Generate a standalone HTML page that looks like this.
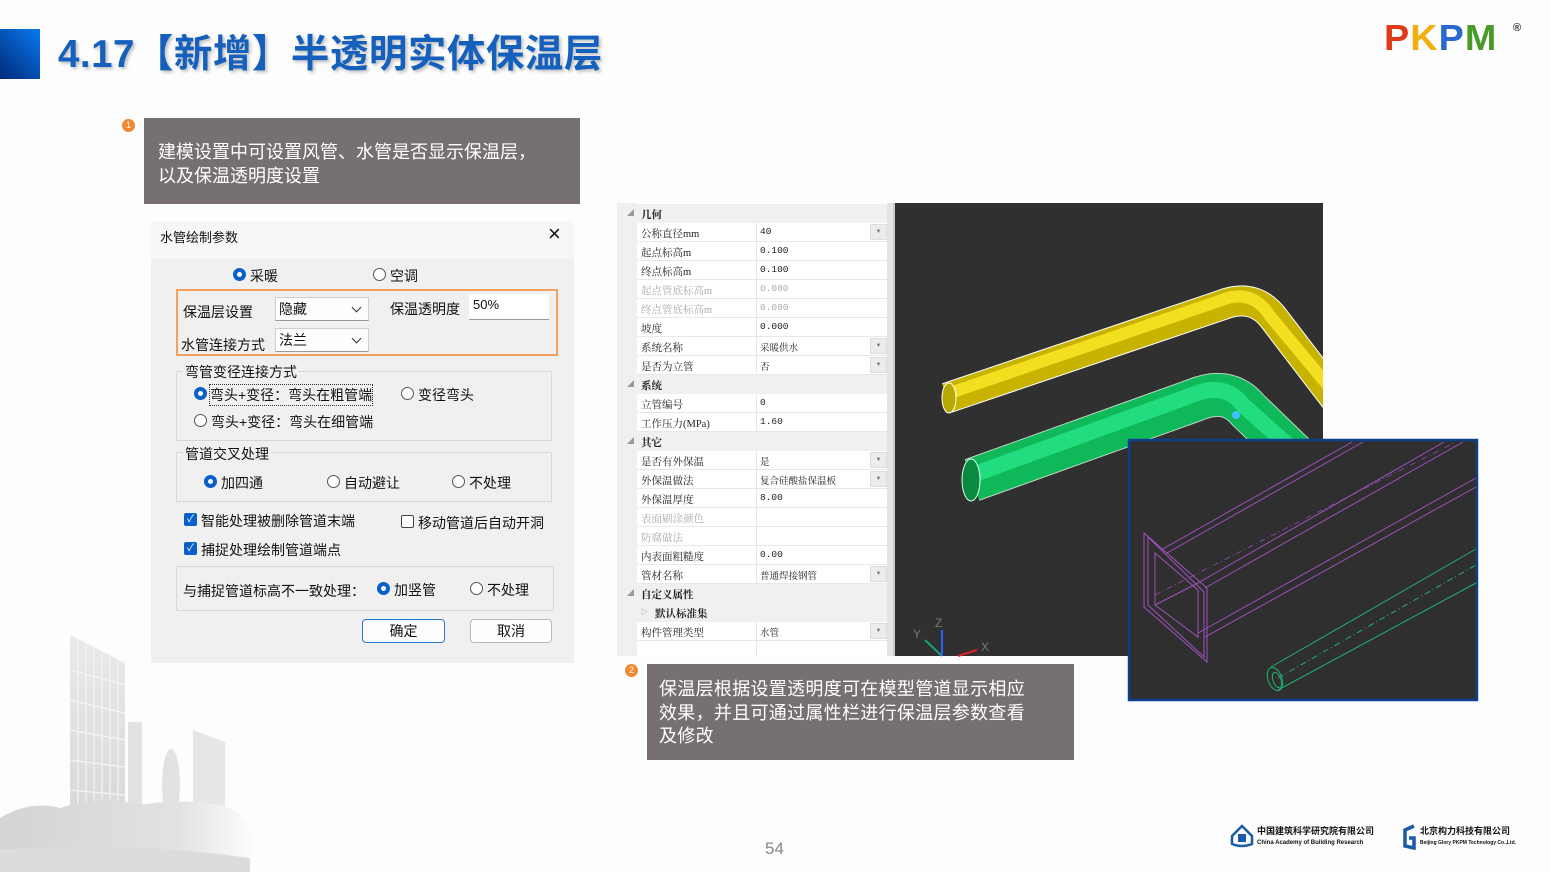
<!DOCTYPE html>
<html><head><meta charset="utf-8">
<style>
*{margin:0;padding:0;box-sizing:border-box}
body{width:1551px;height:872px;background:#fdfdfd;position:relative;overflow:hidden;font-family:"Liberation Sans","Noto Sans CJK SC",sans-serif}
.abs{position:absolute}
.title{left:58px;top:23px;font-size:38.5px;font-weight:bold;color:#1560bd;letter-spacing:0.5px;text-shadow:2px 2px 3px rgba(0,0,0,0.25);white-space:nowrap}
.callout{background:#767070;color:#fff;font-size:18px;line-height:23.5px}
.num{width:13px;height:13px;border-radius:50%;background:#f08a30;color:#fff;font-size:9px;line-height:13px;text-align:center}
.dlg{left:151px;top:221px;width:423px;height:442px;background:#f0f0f0;font-size:14px;color:#111}
.dlg .t{position:absolute;white-space:nowrap}
.radio{position:absolute;width:13px;height:13px;border-radius:50%;border:1px solid #555;background:#fff}
.radio.on{border:4px solid #0a5fc8;background:#fff}
.chk{position:absolute;width:13px;height:13px;border-radius:2px;background:#0a5fc8;color:#fff;font-size:10px;line-height:13px;text-align:center}
.chk.off{background:#fff;border:1px solid #444}
.grp{position:absolute;border:1px solid #d6d6d6;border-radius:2px}
.combo{position:absolute;background:#fdfdfd;border:1px solid #cfcfcf;border-bottom:1px solid #999;font-size:14px;padding-left:3px;line-height:22px}
.combo:after{content:"";position:absolute;right:8px;top:6px;width:6px;height:6px;border-right:1px solid #333;border-bottom:1px solid #333;transform:rotate(45deg)}
.btn{position:absolute;background:#fdfdfd;border:1px solid #bbb;border-radius:4px;text-align:center;line-height:22px;font-size:14px}
.prop{left:617px;top:203px;width:276px;height:453px;background:#fff;font-family:"Liberation Serif","Noto Serif CJK SC",serif;font-size:10.5px;color:#222}
.row{position:absolute;left:20px;width:250px;height:19px;border-bottom:1px solid #e8e8e8}
.row .l{position:absolute;left:4px;top:3px;white-space:nowrap}
.row .v{position:absolute;left:123px;top:3px;white-space:nowrap;font-family:"Liberation Mono","Noto Serif CJK SC",monospace;font-size:9.5px}
.row .sep{position:absolute;left:119px;top:0;width:1px;height:19px;background:#e8e8e8}
.row .dd{position:absolute;left:233px;top:1px;width:17px;height:16px;background:#ececec;border:1px solid #ddd;font-size:6px;text-align:center;line-height:14px;color:#777}
.sec{position:absolute;left:0;width:270px;height:19px;background:#f0f0f0;font-weight:bold}
.sec span{position:absolute;left:24px;top:3px}
.sec i{position:absolute;left:10px;top:4px;font-style:normal;font-size:7px;color:#999}
.g{color:#aaa}
</style></head><body>

<!-- city background -->
<svg class="abs" style="left:0;top:600px" width="330" height="272">
<defs>
<linearGradient id="fade" x1="0" x2="1" y1="0" y2="0"><stop offset="0" stop-color="#d4d4d4"/><stop offset="0.7" stop-color="#e2e2e2"/><stop offset="1" stop-color="#fdfdfd"/></linearGradient>
<linearGradient id="fv" x1="0" x2="0" y1="0" y2="1"><stop offset="0" stop-color="#eaeaea"/><stop offset="1" stop-color="#d8d8d8"/></linearGradient>
</defs>
<polygon points="70,35 125,63 125,215 70,215" fill="url(#fv)"/>
<g stroke="#f4f4f4" stroke-width="1.2">
<line x1="78" y1="38" x2="78" y2="215"/><line x1="86" y1="42" x2="86" y2="215"/><line x1="94" y1="46" x2="94" y2="215"/><line x1="102" y1="50" x2="102" y2="215"/><line x1="110" y1="54" x2="110" y2="215"/><line x1="118" y1="58" x2="118" y2="215"/>
<line x1="70" y1="70" x2="125" y2="85"/><line x1="70" y1="100" x2="125" y2="113"/><line x1="70" y1="130" x2="125" y2="140"/><line x1="70" y1="160" x2="125" y2="167"/><line x1="70" y1="190" x2="125" y2="195"/></g>
<rect x="128" y="122" width="14" height="95" fill="#e2e2e2"/>
<ellipse cx="171" cy="185" rx="9" ry="36" fill="#e2e2e2"/>
<polygon points="193,130 225,142 225,215 193,215" fill="#e6e6e6"/>
<path d="M0,218 Q30,200 60,208 Q100,195 140,205 Q180,198 220,205 Q245,210 255,240 L255,272 L0,272Z" fill="url(#fade)"/>
<path d="M0,250 Q120,240 250,258 L250,272 L0,272Z" fill="#dcdcdc"/>
</svg>

<!-- header -->
<div class="abs" style="left:0;top:29px;width:40px;height:50px;background:linear-gradient(225deg,#0a7af0,#002a7a)"></div>
<div class="abs title">4.17【新增】半透明实体保温层</div>

<!-- PKPM logo -->
<div class="abs" style="left:1384px;top:18px;font-family:'Liberation Sans',sans-serif;font-weight:900;font-size:36px;letter-spacing:1px;line-height:40px;white-space:nowrap;transform:scaleX(1.05);transform-origin:left">
<span style="color:#e03a1a">P</span><span style="color:#f0b010">K</span><span style="color:#2a6ad0">P</span><span style="color:#4a9a2a">M</span></div>
<div class="abs" style="left:1513px;top:22px;font-size:11px;font-weight:bold;color:#333">®</div>

<!-- callout 1 -->
<div class="abs num" style="left:122px;top:119px">1</div>
<div class="abs callout" style="left:144px;top:118px;width:436px;height:86px;padding:23px 0 0 14px">建模设置中可设置风管、水管是否显示保温层，<br>以及保温透明度设置</div>

<!-- dialog -->
<div class="abs dlg">
 <div style="position:absolute;left:0;top:0;width:423px;height:38px;background:#f6f6f6"></div>
 <div class="t" style="left:9px;top:6px;font-size:13px">水管绘制参数</div>
 <div class="t" style="left:397px;top:0px;font-size:22px;font-weight:200">×</div>
 <div class="radio on" style="left:82px;top:47px"></div><div class="t" style="left:99px;top:45px">采暖</div>
 <div class="radio" style="left:222px;top:47px"></div><div class="t" style="left:239px;top:45px">空调</div>
 <div style="position:absolute;left:25px;top:68px;width:382px;height:67px;border:2px solid #f4a060"></div>
 <div class="t" style="left:32px;top:81px">保温层设置</div>
 <div class="combo" style="left:124px;top:76px;width:94px;height:24px">隐藏</div>
 <div class="t" style="left:239px;top:78px">保温透明度</div>
 <div style="position:absolute;left:318px;top:73px;width:80px;height:26px;background:#fff;border-bottom:1px solid #999;font-size:13px;padding:3px 0 0 4px">50%</div>
 <div class="t" style="left:30px;top:114px">水管连接方式</div>
 <div class="combo" style="left:124px;top:107px;width:94px;height:24px">法兰</div>
 <div class="grp" style="left:25px;top:150px;width:376px;height:70px"></div>
 <div class="t" style="left:32px;top:141px;background:#f0f0f0;padding:0 2px">弯管变径连接方式</div>
 <div class="radio on" style="left:43px;top:166px"></div><div class="t" style="left:59px;top:164px;outline:1px dotted #333">弯头+变径：弯头在粗管端</div>
 <div class="radio" style="left:250px;top:166px"></div><div class="t" style="left:267px;top:164px">变径弯头</div>
 <div class="radio" style="left:43px;top:193px"></div><div class="t" style="left:60px;top:191px">弯头+变径：弯头在细管端</div>
 <div class="grp" style="left:25px;top:231px;width:376px;height:50px"></div>
 <div class="t" style="left:32px;top:223px;background:#f0f0f0;padding:0 2px">管道交叉处理</div>
 <div class="radio on" style="left:53px;top:254px"></div><div class="t" style="left:70px;top:252px">加四通</div>
 <div class="radio" style="left:176px;top:254px"></div><div class="t" style="left:193px;top:252px">自动避让</div>
 <div class="radio" style="left:301px;top:254px"></div><div class="t" style="left:318px;top:252px">不处理</div>
 <div class="chk" style="left:33px;top:292px">✓</div><div class="t" style="left:50px;top:290px">智能处理被删除管道末端</div>
 <div class="chk off" style="left:250px;top:294px"></div><div class="t" style="left:267px;top:292px">移动管道后自动开洞</div>
 <div class="chk" style="left:33px;top:321px">✓</div><div class="t" style="left:50px;top:319px">捕捉处理绘制管道端点</div>
 <div class="grp" style="left:25px;top:345px;width:378px;height:45px"></div>
 <div class="t" style="left:32px;top:360px">与捕捉管道标高不一致处理：</div>
 <div class="radio on" style="left:226px;top:361px"></div><div class="t" style="left:243px;top:359px">加竖管</div>
 <div class="radio" style="left:319px;top:361px"></div><div class="t" style="left:336px;top:359px">不处理</div>
 <div class="btn" style="left:211px;top:398px;width:83px;height:24px;border:1.5px solid #2a78d0">确定</div>
 <div class="btn" style="left:319px;top:398px;width:82px;height:24px">取消</div>
</div>

<!-- property panel -->
<div class="abs prop">
 <div style="position:absolute;left:0;top:0;width:20px;height:453px;background:#f0f0f0"></div>
 <div style="position:absolute;left:270px;top:0;width:6px;height:453px;background:#e4e4e4"></div>
 <div class="sec" style="top:1px"><i>◢</i><span>几何</span></div>
 <div class="row" style="top:20px"><span class="l">公称直径mm</span><span class="sep"></span><span class="v">40</span><span class="dd">▼</span></div>
 <div class="row" style="top:39px"><span class="l">起点标高m</span><span class="sep"></span><span class="v">0.100</span></div>
 <div class="row" style="top:58px"><span class="l">终点标高m</span><span class="sep"></span><span class="v">0.100</span></div>
 <div class="row g" style="top:77px"><span class="l">起点管底标高m</span><span class="sep"></span><span class="v">0.080</span></div>
 <div class="row g" style="top:96px"><span class="l">终点管底标高m</span><span class="sep"></span><span class="v">0.080</span></div>
 <div class="row" style="top:115px"><span class="l">坡度</span><span class="sep"></span><span class="v">0.000</span></div>
 <div class="row" style="top:134px"><span class="l">系统名称</span><span class="sep"></span><span class="v">采暖供水</span><span class="dd">▼</span></div>
 <div class="row" style="top:153px"><span class="l">是否为立管</span><span class="sep"></span><span class="v">否</span><span class="dd">▼</span></div>
 <div class="sec" style="top:172px"><i>◢</i><span>系统</span></div>
 <div class="row" style="top:191px"><span class="l">立管编号</span><span class="sep"></span><span class="v">0</span></div>
 <div class="row" style="top:210px"><span class="l">工作压力(MPa)</span><span class="sep"></span><span class="v">1.60</span></div>
 <div class="sec" style="top:229px"><i>◢</i><span>其它</span></div>
 <div class="row" style="top:248px"><span class="l">是否有外保温</span><span class="sep"></span><span class="v">是</span><span class="dd">▼</span></div>
 <div class="row" style="top:267px"><span class="l">外保温做法</span><span class="sep"></span><span class="v">复合硅酸盐保温板</span><span class="dd">▼</span></div>
 <div class="row" style="top:286px"><span class="l">外保温厚度</span><span class="sep"></span><span class="v">8.00</span></div>
 <div class="row g" style="top:305px"><span class="l">表面刷涂颜色</span><span class="sep"></span></div>
 <div class="row g" style="top:324px"><span class="l">防腐做法</span><span class="sep"></span></div>
 <div class="row" style="top:343px"><span class="l">内表面粗糙度</span><span class="sep"></span><span class="v">0.00</span></div>
 <div class="row" style="top:362px"><span class="l">管材名称</span><span class="sep"></span><span class="v">普通焊接钢管</span><span class="dd">▼</span></div>
 <div class="sec" style="top:381px"><i>◢</i><span>自定义属性</span></div>
 <div class="sec" style="top:400px"><i style="left:24px">▷</i><span style="left:38px">默认标准集</span></div>
 <div class="row" style="top:419px"><span class="l">构件管理类型</span><span class="sep"></span><span class="v">水管</span><span class="dd">▼</span></div>
 <div style="position:absolute;left:139px;top:438px;width:1px;height:15px;background:#e8e8e8"></div>
</div>

<!-- 3D viewport -->
<svg class="abs" style="left:0;top:0" width="1551" height="872">
 <defs>
  <clipPath id="vp"><rect x="895" y="203" width="428" height="453"/></clipPath>
 </defs>
 <rect x="893" y="203" width="2" height="453" fill="#ccc"/>
 <rect x="895" y="203" width="428" height="453" fill="#303030"/>
 <g clip-path="url(#vp)" fill="none" stroke-linecap="butt" stroke-linejoin="round">
  <path d="M947,398 L1222,305 Q1255,292 1275,320 L1340,405" stroke="#fff" stroke-width="31"/>
  <path d="M947,398 L1222,305 Q1255,292 1275,320 L1340,405" stroke="#c8b400" stroke-width="29"/>
  <path d="M947,394 L1222,300 Q1252,288 1270,316 L1340,400" stroke="#f2e020" stroke-width="12"/>
  <path d="M972,480 L1195,400 Q1228,386 1248,410 L1310,470" stroke="#e0ffe8" stroke-width="44" stroke-opacity="0.8"/>
  <path d="M972,480 L1195,400 Q1228,386 1248,410 L1310,470" stroke="#0fb858" stroke-width="42"/>
  <path d="M972,475 L1195,394 Q1225,382 1243,405 L1310,465" stroke="#22dd80" stroke-width="16"/>
  <ellipse cx="971" cy="480" rx="9" ry="21" fill="#0a8a40" stroke="#dfffe8" stroke-width="1"/>
  <ellipse cx="949" cy="398" rx="7" ry="15" fill="#b8a800" stroke="#fff" stroke-width="1"/>
  <circle cx="1236" cy="415" r="4" fill="#40c0ff"/>
 </g>
 <g stroke-width="2">
  <line x1="942" y1="656" x2="925" y2="640" stroke="#1aa080"/>
  <line x1="942" y1="656" x2="942" y2="630" stroke="#2a60ff"/>
  <line x1="958" y1="656" x2="977" y2="650" stroke="#e02020"/>
 </g>
 <g font-family="Liberation Sans" font-size="12" fill="#777"><text x="935" y="627">Z</text><text x="913" y="638">Y</text><text x="981" y="651">X</text></g>

 <!-- inset -->
 <rect x="1129" y="440" width="348" height="260" fill="#2f2f2f" stroke="#0d3f8f" stroke-width="2.5"/>
 <g fill="none" stroke-width="1">
  <g stroke="#a050c0">
   <polygon points="1144,533 1144,607 1207,662 1207,588"/>
   <polygon points="1148,537 1148,605 1204,657 1204,592"/>
   <polygon points="1155,553 1155,605 1198,637 1198,590"/>
   <line x1="1161" y1="550" x2="1352" y2="442"/>
   <line x1="1167" y1="553" x2="1363" y2="442"/>
   <line x1="1198" y1="583" x2="1444" y2="442"/>
   <line x1="1205" y1="588" x2="1463" y2="442"/>
   <line x1="1198" y1="633" x2="1476" y2="478"/>
   <line x1="1205" y1="637" x2="1476" y2="487"/>
   <line x1="1155" y1="605" x2="1198" y2="583"/>
   <line x1="1155" y1="595" x2="1456" y2="442" stroke-dasharray="6,3,1,3" stroke-opacity="0.7"/>
  </g>
  <g stroke="#20b070">
   <line x1="1271" y1="667" x2="1476" y2="549"/>
   <line x1="1278" y1="690" x2="1476" y2="583"/>
   <line x1="1278" y1="678" x2="1476" y2="565" stroke-dasharray="6,3,1,3"/>
   <ellipse cx="1275" cy="679" rx="7" ry="12" transform="rotate(-20 1275 679)"/>
   <ellipse cx="1277" cy="680" rx="4" ry="8" transform="rotate(-20 1277 680)"/>
  </g>
 </g>
</svg>

<!-- callout 2 -->
<div class="abs num" style="left:625px;top:664px">2</div>
<div class="abs callout" style="left:647px;top:664px;width:427px;height:96px;padding:14px 0 0 12px;letter-spacing:0.3px">保温层根据设置透明度可在模型管道显示相应<br>效果，并且可通过属性栏进行保温层参数查看<br>及修改</div>

<!-- page number -->
<div class="abs" style="left:765px;top:839px;font-size:17px;color:#888">54</div>

<!-- bottom logos -->
<svg class="abs" style="left:1230px;top:824px" width="24" height="24"><path d="M12,2 L22,12 L22,20 Q12,24 2,20 L2,12Z" fill="none" stroke="#1a5aa8" stroke-width="2.5"/><rect x="8" y="10" width="8" height="8" fill="#1a5aa8"/></svg>
<div class="abs" style="left:1257px;top:826px;font-size:9px;font-weight:bold;color:#111;white-space:nowrap;line-height:10px">中国建筑科学研究院有限公司<br><span style="font-size:6px">China Academy of Building Research</span></div>
<svg class="abs" style="left:1401px;top:824px" width="16" height="26"><path d="M13,2 L4,6 L4,22 L13,24 L13,14 L8,14" fill="none" stroke="#1a5aa8" stroke-width="3.5"/></svg>
<div class="abs" style="left:1420px;top:826px;font-size:9px;font-weight:bold;color:#111;white-space:nowrap;line-height:10px">北京构力科技有限公司<br><span style="font-size:5px">Beijing Glory PKPM Technology Co.,Ltd.</span></div>
</body></html>
